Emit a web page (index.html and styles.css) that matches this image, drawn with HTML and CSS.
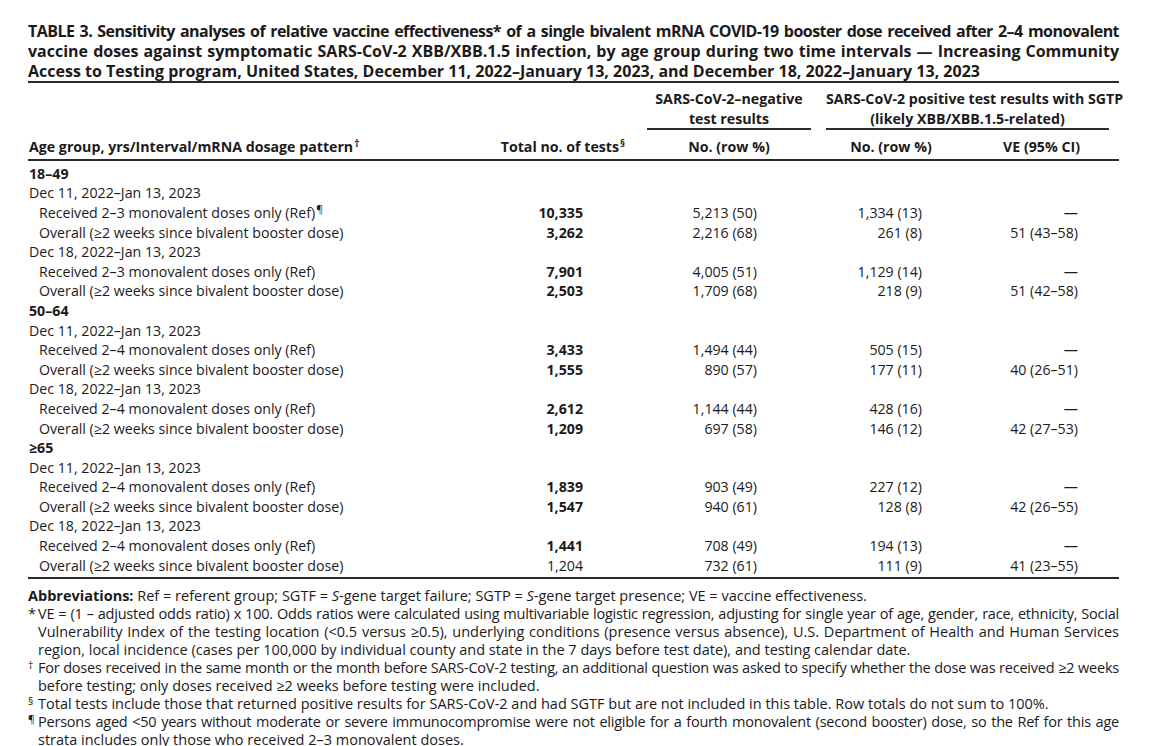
FILE: index.html
```html
<!DOCTYPE html>
<html lang="en">
<head>
<meta charset="utf-8">
<title>Table 3</title>
<link rel="stylesheet" href="styles.css">
</head>
<body>
<div class="page">
  <h1 class="title">
    <span class="line jl l1">TABLE 3. Sensitivity analyses of relative vaccine effectiveness* of a single bivalent mRNA COVID-19 booster dose received after 2–4 monovalent</span>
    <span class="line jl">vaccine doses against symptomatic SARS-CoV-2 XBB/XBB.1.5 infection, by age group during two time intervals — Increasing Community</span>
    <span class="line">Access to Testing program, United States, December 11, 2022–January 13, 2023, and December 18, 2022–January 13, 2023</span>
  </h1>

  <table class="data">
    <colgroup>
      <col class="c1"><col class="c2"><col class="c3"><col class="c4"><col class="c5">
    </colgroup>
    <thead>
      <tr class="hr1">
        <th></th>
        <th></th>
        <th class="grp"><div class="ul ul-neg">SARS-CoV-2–negative<br>test results</div></th>
        <th class="grp" colspan="2"><div class="ul ul-pos">SARS-CoV-2 positive test results with SGTP<br>(likely XBB/XBB.1.5-related)</div></th>
      </tr>
      <tr class="hr2">
        <th class="lab">Age group, yrs/Interval/mRNA dosage pattern<sup>†</sup></th>
        <th class="tot">Total no. of tests<sup>§</sup></th>
        <th class="ctr">No. (row %)</th>
        <th class="ctr">No. (row %)</th>
        <th class="ctr">VE (95% CI)</th>
      </tr>
    </thead>
    <tbody>
      <tr class="age first"><td colspan="5">18–49</td></tr>
      <tr class="ivl"><td colspan="5">Dec 11, 2022–Jan 13, 2023</td></tr>
      <tr><td class="sub">Received 2–3 monovalent doses only (Ref)<sup>¶</sup></td><td class="n2 b">10,335</td><td class="n3">5,213 (50)</td><td class="n4">1,334 (13)</td><td class="n5">—</td></tr>
      <tr><td class="sub">Overall (≥2 weeks since bivalent booster dose)</td><td class="n2 b">3,262</td><td class="n3">2,216 (68)</td><td class="n4">261 (8)</td><td class="n5">51 (43–58)</td></tr>
      <tr class="ivl"><td colspan="5">Dec 18, 2022–Jan 13, 2023</td></tr>
      <tr><td class="sub">Received 2–3 monovalent doses only (Ref)</td><td class="n2 b">7,901</td><td class="n3">4,005 (51)</td><td class="n4">1,129 (14)</td><td class="n5">—</td></tr>
      <tr><td class="sub">Overall (≥2 weeks since bivalent booster dose)</td><td class="n2 b">2,503</td><td class="n3">1,709 (68)</td><td class="n4">218 (9)</td><td class="n5">51 (42–58)</td></tr>

      <tr class="age"><td colspan="5">50–64</td></tr>
      <tr class="ivl"><td colspan="5">Dec 11, 2022–Jan 13, 2023</td></tr>
      <tr><td class="sub">Received 2–4 monovalent doses only (Ref)</td><td class="n2 b">3,433</td><td class="n3">1,494 (44)</td><td class="n4">505 (15)</td><td class="n5">—</td></tr>
      <tr><td class="sub">Overall (≥2 weeks since bivalent booster dose)</td><td class="n2 b">1,555</td><td class="n3">890 (57)</td><td class="n4">177 (11)</td><td class="n5">40 (26–51)</td></tr>
      <tr class="ivl"><td colspan="5">Dec 18, 2022–Jan 13, 2023</td></tr>
      <tr><td class="sub">Received 2–4 monovalent doses only (Ref)</td><td class="n2 b">2,612</td><td class="n3">1,144 (44)</td><td class="n4">428 (16)</td><td class="n5">—</td></tr>
      <tr><td class="sub">Overall (≥2 weeks since bivalent booster dose)</td><td class="n2 b">1,209</td><td class="n3">697 (58)</td><td class="n4">146 (12)</td><td class="n5">42 (27–53)</td></tr>

      <tr class="age"><td colspan="5">≥65</td></tr>
      <tr class="ivl"><td colspan="5">Dec 11, 2022–Jan 13, 2023</td></tr>
      <tr><td class="sub">Received 2–4 monovalent doses only (Ref)</td><td class="n2 b">1,839</td><td class="n3">903 (49)</td><td class="n4">227 (12)</td><td class="n5">—</td></tr>
      <tr><td class="sub">Overall (≥2 weeks since bivalent booster dose)</td><td class="n2 b">1,547</td><td class="n3">940 (61)</td><td class="n4">128 (8)</td><td class="n5">42 (26–55)</td></tr>
      <tr class="ivl"><td colspan="5">Dec 18, 2022–Jan 13, 2023</td></tr>
      <tr><td class="sub">Received 2–4 monovalent doses only (Ref)</td><td class="n2 b">1,441</td><td class="n3">708 (49)</td><td class="n4">194 (13)</td><td class="n5">—</td></tr>
      <tr class="last"><td class="sub">Overall (≥2 weeks since bivalent booster dose)</td><td class="n2">1,204</td><td class="n3">732 (61)</td><td class="n4">111 (9)</td><td class="n5">41 (23–55)</td></tr>
    </tbody>
  </table>

  <div class="notes">
    <p class="abbr"><b>Abbreviations:</b> Ref = referent group; SGTF = <i>S</i>-gene target failure; SGTP = <i>S</i>-gene target presence; VE = vaccine effectiveness.</p>
    <div class="note">
      <span class="mk">*</span>
      <div class="txt">
        <span class="line jl tight">VE = (1 – adjusted odds ratio) x 100. Odds ratios were calculated using multivariable logistic regression, adjusting for single year of age, gender, race, ethnicity, Social</span>
        <span class="line jl">Vulnerability Index of the testing location (&lt;0.5 versus ≥0.5), underlying conditions (presence versus absence), U.S. Department of Health and Human Services</span>
        <span class="line">region, local incidence (cases per 100,000 by individual county and state in the 7 days before test date), and testing calendar date.</span>
      </div>
    </div>
    <div class="note">
      <span class="mk sym">†</span>
      <div class="txt">
        <span class="line jl tight">For doses received in the same month or the month before SARS-CoV-2 testing, an additional question was asked to specify whether the dose was received ≥2 weeks</span>
        <span class="line">before testing; only doses received ≥2 weeks before testing were included.</span>
      </div>
    </div>
    <div class="note">
      <span class="mk sym">§</span>
      <div class="txt">
        <span class="line">Total tests include those that returned positive results for SARS-CoV-2 and had SGTF but are not included in this table. Row totals do not sum to 100%.</span>
      </div>
    </div>
    <div class="note">
      <span class="mk sym">¶</span>
      <div class="txt">
        <span class="line jl tight">Persons aged &lt;50 years without moderate or severe immunocompromise were not eligible for a fourth monovalent (second booster) dose, so the Ref for this age</span>
        <span class="line">strata includes only those who received 2–3 monovalent doses.</span>
      </div>
    </div>
  </div>
</div>
</body>
</html>
```

FILE: styles.css
```css
* { box-sizing: border-box; }

html, body {
  margin: 0;
  padding: 0;
  background: #ffffff;
}

body {
  font-family: "Open Sans", "Noto Sans", "Liberation Sans", sans-serif;
  color: #1c1a1b;
  font-size: 14.2px;
}

.page {
  width: 1091px;
  margin-left: 28px;
  padding-top: 21px;
}

.line {
  display: block;
  white-space: nowrap;
}

.jl {
  text-align: justify;
  text-align-last: justify;
}

.title {
  margin: 0;
  font-size: 16px;
  line-height: 20px;
  font-weight: 700;
  border-bottom: 2px solid #2b2b2b;
}

.title .l1 {
  letter-spacing: -0.55px;
  word-spacing: -1px;
}

/* table */
.data {
  width: 1091px;
  table-layout: fixed;
  border-collapse: collapse;
  border-bottom: 2px solid #2b2b2b;
}

.c1 { width: 452px; }
.c2 { width: 160px; }
.c3 { width: 178px; }
.c4 { width: 146px; }
.c5 { width: 155px; }

.data th,
.data td {
  padding: 0;
  line-height: 19.6px;
  white-space: nowrap;
}

.data th {
  font-weight: 700;
}

.hr1 th {
  padding-top: 6px;
  vertical-align: bottom;
}

.ul {
  text-align: center;
  border-bottom: 2px solid #2b2b2b;
  padding-bottom: 0;
}

.ul-neg { margin: 0 7px 0 7px; }
.ul-pos { margin: 0 10px 0 8px; }

.hr2 th {
  padding-top: 7px;
  padding-bottom: 2px;
  border-bottom: 2px solid #2b2b2b;
}

.hr2 .lab { text-align: left; padding-left: 1px; }
.hr2 .tot { text-align: right; padding-right: 15px; }
.hr2 .ctr { text-align: center; }

sup {
  font-size: 0.72em;
  line-height: 0;
  vertical-align: 0.5em;
  margin-left: 1px;
}

.data tbody td {
  text-align: right;
}

.data tbody tr.first td { padding-top: 3px; }
.data tbody tr.last td { padding-bottom: 2px; }

.age td {
  text-align: left !important;
  font-weight: 700;
  padding-left: 1px !important;
}

.ivl td {
  text-align: left !important;
  padding-left: 1px !important;
}

.data td.sub {
  text-align: left;
  padding-left: 11px;
}

.n2 { padding-right: 57px !important; }
.n3 { padding-right: 61px !important; }
.n4 { padding-right: 42px !important; }
.n5 { padding-right: 41px !important; }

.b { font-weight: 700; }

/* notes */
.notes {
  margin-top: 8px;
  font-size: 14.5px;
  line-height: 18px;
}

.abbr {
  margin: 0;
}

.note {
  display: flex;
}

.mk {
  width: 10px;
  flex: none;
}

.mk.sym {
  font-size: 0.72em;
  line-height: 12px;
}

.tight {
  letter-spacing: -0.22px;
  word-spacing: -0.5px;
}

.txt {
  flex: 1;
  min-width: 0;
}
```
